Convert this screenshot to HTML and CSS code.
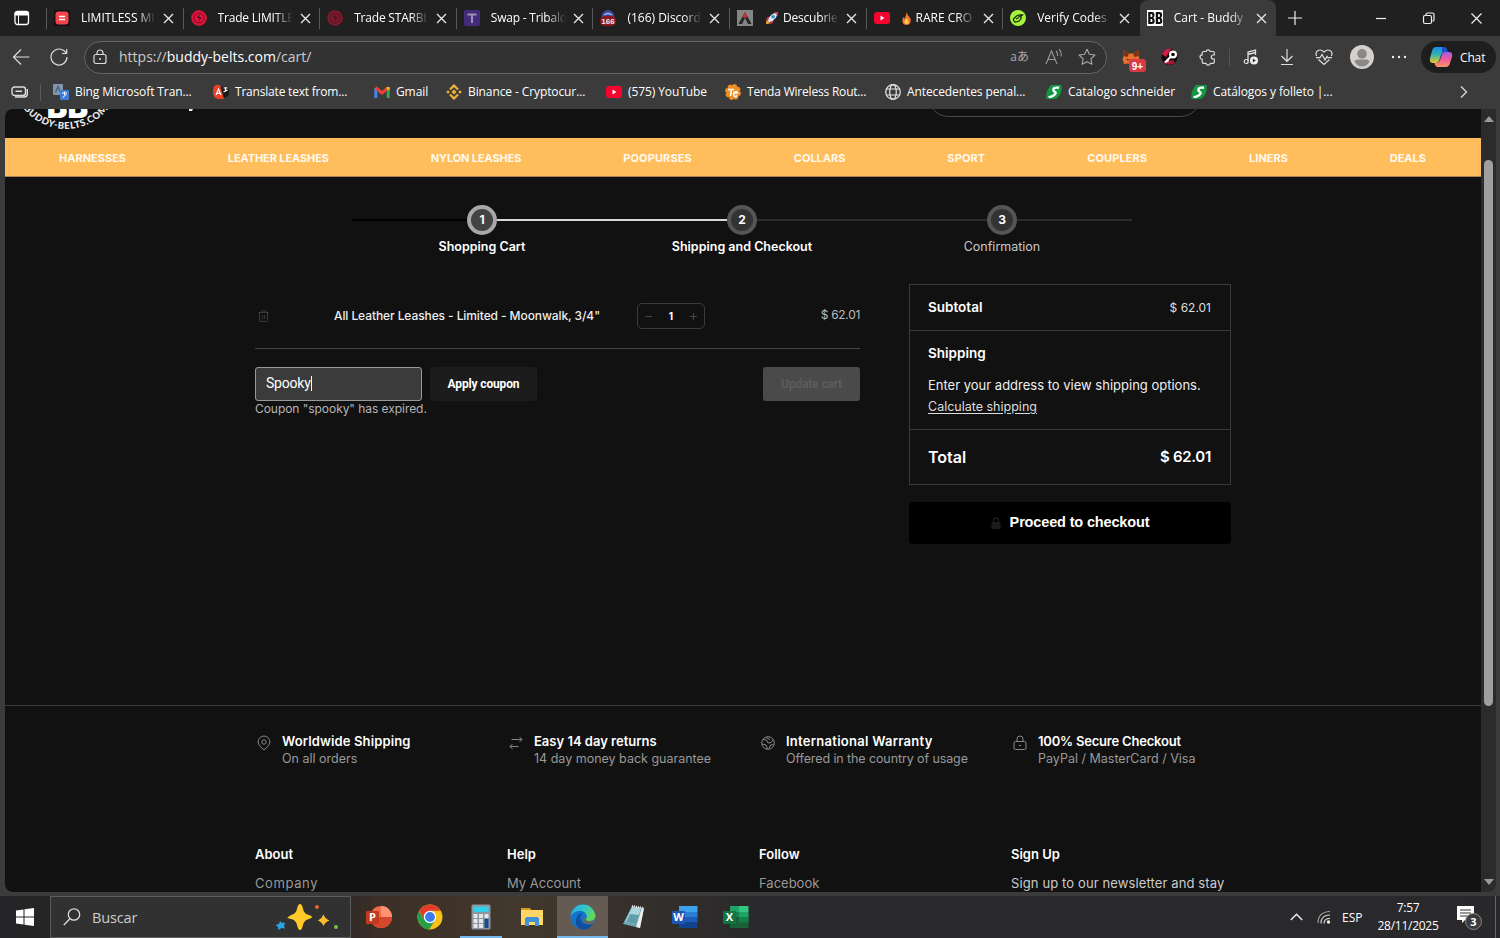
FILE: index.html
```html
<!DOCTYPE html>
<html lang="es">
<head>
<meta charset="utf-8">
<title>Cart - Buddy Belts</title>
<link rel="stylesheet" href="styles.css">
</head>
<body>
<header class="tabs">
  <svg class="tab-actions" width="16" height="16" viewBox="0 0 16 16"><rect x="1" y="1.5" width="13.5" height="13" rx="2.5" fill="none" stroke="#fff" stroke-width="1.3"/><path d="M1 4V3.500Q1 1.500 3 1.500H12.500Q14.500 1.500 14.500 3.500V5H1ZM4.500 5V14" fill="#fff" stroke="#fff" stroke-width="1"/></svg>
  <div class="tab"><svg class="fav" viewBox="0 0 16 16"><path fill="#111" d="M0 0h16v16H0z"/><rect x="1.500" y="1.500" width="13" height="13" rx="3" fill="#f4444b"/><path d="M5 6.500h6M5 9.500h6" stroke="#fff" stroke-width="1.500"/></svg><span class="title">LIMITLESS MI</span><svg class="x" viewBox="0 0 11 11"><path d="M1 1l9 9M10 1l-9 9"/></svg></div>
  <div class="tab"><svg class="fav" viewBox="0 0 16 16"><circle cx="8" cy="8" r="7.500" fill="#e0143c" stroke="#e0143c" stroke-dasharray="1.500 1"/><circle cx="8" cy="8" r="5" fill="none" stroke="#5b0b1c" stroke-width=".8"/><path d="M8.500 4 6 8h2.500L7.500 12 10.500 7.500H8z" fill="#34070f"/></svg><span class="title snug">Trade LIMITLE</span><svg class="x" viewBox="0 0 11 11"><path d="M1 1l9 9M10 1l-9 9"/></svg></div>
  <div class="tab"><svg class="fav dim" viewBox="0 0 16 16"><circle cx="8" cy="8" r="7.500" fill="#e0143c" stroke="#e0143c" stroke-dasharray="1.500 1"/><circle cx="8" cy="8" r="5" fill="none" stroke="#5b0b1c" stroke-width=".8"/><path d="M8.500 4 6 8h2.500L7.500 12 10.500 7.500H8z" fill="#34070f"/></svg><span class="title snug">Trade STARBI</span><svg class="x" viewBox="0 0 11 11"><path d="M1 1l9 9M10 1l-9 9"/></svg></div>
  <div class="tab"><svg class="fav" viewBox="0 0 16 16"><rect width="16" height="16" rx="2" fill="#452b7c"/><path d="M3.500 4.500h9M8 4.500V13" stroke="#9c93ae" stroke-width="2"/></svg><span class="title snug">Swap - Tribald</span><svg class="x" viewBox="0 0 11 11"><path d="M1 1l9 9M10 1l-9 9"/></svg></div>
  <div class="tab"><svg class="fav" viewBox="0 0 16 16"><circle cx="8" cy="6.500" r="6.500" fill="#39479a"/><path d="M4 5q4-3 8 0" stroke="#b9bedb" stroke-width="1.300" fill="none"/><rect y="6" width="16" height="10" rx="5" fill="#8e1820"/><text x="8" y="14" class="fav-count">166</text></svg><span class="title">(166) Discord</span><svg class="x" viewBox="0 0 11 11"><path d="M1 1l9 9M10 1l-9 9"/></svg></div>
  <div class="tab"><svg class="fav" viewBox="0 0 16 16"><path fill="#858585" d="M0 0h16v16H0z"/><path d="M1.500 14 8 2l6.500 12h-3.500L8 8l-3 6z" fill="#262626"/><path d="M8 2l-2.500 5L8 8l2.500-1z" fill="#c9303a"/></svg><span class="title snug"><svg class="emoji" viewBox="0 0 16 16"><path d="M2 14l1-5 4 4z" fill="#f6a62b"/><path d="M4 9 1.500 9.500 4 6h3zM7 12l-.5 2.500L10 12V9z" fill="#d8283b"/><path d="M4 10Q7 2 15 1q-1 8-9 11z" fill="#dce6ee"/><path d="M11 1.700Q13 1 15 1q0 2-.8 4z" fill="#e23a49"/><circle cx="9.700" cy="6.200" r="1.900" fill="#2a91d8"/></svg>Descubrie</span><svg class="x" viewBox="0 0 11 11"><path d="M1 1l9 9M10 1l-9 9"/></svg></div>
  <div class="tab"><svg class="fav" viewBox="0 0 16 16"><rect y="2" width="16" height="12" rx="3" fill="#f7032f"/><path d="M6.500 5.500 10.500 8l-4 2.500z" fill="#fff"/></svg><span class="title"><svg class="emoji flame" viewBox="0 0 12 16"><path d="M6 1q1 3 3 5t1.500 5Q10 15 6 15t-4.500-4Q1.200 8 3 6q0 2 1 2Q6 5 6 1z" fill="#f4772c"/><path d="M6 8q3 3 2 5t-4 0Q3 11 6 8z" fill="#ffd04b"/></svg>RARE CRO</span><svg class="x" viewBox="0 0 11 11"><path d="M1 1l9 9M10 1l-9 9"/></svg></div>
  <div class="tab"><svg class="fav" viewBox="0 0 16 16"><circle cx="8" cy="8" r="8" fill="#a5f23f"/><path d="M3.500 9 6.500 6q3-1.500 6-1-1 1-2.500 1.500 2 .5.500 3T5 12q-2-1-1.500-3zM6 9l3-1.500" fill="none" stroke="#17300a" stroke-width="1.300"/></svg><span class="title">Verify Codes</span><svg class="x" viewBox="0 0 11 11"><path d="M1 1l9 9M10 1l-9 9"/></svg></div>
  <div class="tab active"><svg class="fav" viewBox="0 0 16 16"><path fill="#fff" d="M0 0h16v16H0z"/><path fill-rule="evenodd" d="M1.200 2H5q2.500 0 2.500 3 0 2-1.200 2.700Q7.700 8.500 7.700 11q0 3-2.700 3H1.200zM3.500 4v3H4.500q.9 0 .9-1.500T4.500 4zM3.500 9v3h1.100q.9 0 .9-1.500T4.600 9zM8.800 2h3.800q2.500 0 2.500 3 0 2-1.200 2.700 1.400.8 1.400 3.300 0 3-2.700 3H8.800zM11.100 4v3h1q.9 0 .9-1.500T12.100 4zM11.100 9v3h1.100q.9 0 .9-1.500T12.200 9z" fill="#111"/></svg><span class="title wide">Cart - Buddy</span><svg class="x" viewBox="0 0 11 11"><path d="M1 1l9 9M10 1l-9 9"/></svg></div>
  <svg class="newtab" width="16" height="16" viewBox="0 0 16 16"><path d="M8 1v14M1 8h14" stroke="#eee" stroke-width="1.200"/></svg>
  <svg class="winctl" width="112" height="16" viewBox="0 0 112 16"><g fill="none" stroke="#eee" stroke-width="1.200"><path d="M1 8.500h10"/><rect x="48.500" y="5.500" width="8" height="8" rx="1.500"/><path d="M51 5V4.500Q51 3 52.500 3h5Q59 3 59 4.500v5.500Q59 11 57.500 11.200"/><path d="M96.500 3.500l10 10M106.500 3.500l-10 10"/></g></svg>
</header>

<div class="toolbar">
  <svg class="back" width="18" height="18" viewBox="0 0 18 18"><path d="M17.500 9H1.500M9 1.500 1.500 9 9 16.500" fill="none" stroke="#ddd" stroke-width="1.200"/></svg>
  <svg class="reload" width="18" height="18" viewBox="0 0 18 18"><path d="M17 9A8 8 0 1 1 14 2.800L16.500 5M16.700 1v4.500H12" fill="none" stroke="#ddd" stroke-width="1.200"/></svg>
  <div class="address">
    <svg width="14" height="16" viewBox="0 0 14 16"><g fill="none" stroke="#ddd" stroke-width="1.200"><rect x="1" y="5.500" width="12" height="9" rx="2"/><path d="M4 5.500V4a3 3 0 0 1 6 0v1.500"/></g><circle cx="7" cy="10" r="1" fill="#ddd"/></svg>
    <span class="url">https://<b>buddy-belts.com</b>/cart/</span>
    <span class="translate">aあ</span>
    <svg class="read" width="18" height="16" viewBox="0 0 18 16"><path d="M1 15 6.500 2 12 15M3 10.500h7M11 2q2 2 1.500 5M14 0q3 3 2 7.500" fill="none" stroke="#999" stroke-width="1.100"/></svg>
    <svg class="star" width="18" height="18" viewBox="0 0 18 18"><path d="M9 1.300l2.400 5 5.500.7-4 3.800 1 5.500L9 13.700l-4.900 2.600 1-5.500-4-3.800 5.500-.7z" fill="none" stroke="#aaa" stroke-width="1.100" stroke-linejoin="round"/></svg>
  </div>
  <div class="ext">
    <svg class="fox" width="26" height="24" viewBox="0 0 26 24"><path d="M2 1l6 3.500h4L18 1l-.5 6 1 3-1.500 5-4-.5-3 1.500-3-1.500L3 15l-1.500-5 1-3z" fill="#e8702a"/><path d="M2 1l6 3.500L6.500 8 2.500 7zM18 1l-6 3.500L13.500 8l4-1z" fill="#7d3218"/><path d="M5.500 9.500l3 1.500-2 .5zM14.500 9.500l-3 1.500 2 .5z" fill="#2a2326"/><rect x="8" y="10" width="17" height="13" rx="3" fill="#d93a45"/><text x="16.500" y="20.500" class="badge">9+</text></svg>
    <svg class="key" width="18" height="18" viewBox="0 0 18 18"><circle cx="8.500" cy="9" r="8" fill="#12070b"/><path d="M1 6Q4 0 10 1L5 9z" fill="#d81b45"/><path d="M2 14q5 5 12 1l-2-3z" fill="#a71735"/><circle cx="12" cy="6.500" r="2.900" fill="none" stroke="#fff" stroke-width="2.200"/><path d="M10 8.500l-6 6M5.500 11.500l2 2" stroke="#fff" stroke-width="2"/></svg>
    <svg class="puzzle" width="18" height="18" viewBox="0 0 18 18"><path d="M4.500 3.500H7a2.200 2.200 0 0 1 4.200 0H14a1.300 1.300 0 0 1 1.300 1.300V7h-1a2 2 0 0 0 0 4h1v3A1.300 1.300 0 0 1 14 15.300h-2.700a2.200 2.200 0 0 1-4.300 0H4.500A1.300 1.300 0 0 1 3.200 14v-2.700a2.200 2.200 0 0 1 0-4.400V4.800A1.300 1.300 0 0 1 4.500 3.500z" fill="none" stroke="#ddd" stroke-width="1.200"/></svg>
    <i class="vsep"></i>
    <svg class="music" width="16" height="16" viewBox="0 0 16 16"><path d="M5 12.500V3l7.500-2v5M5 5.500l7.500-2" fill="none" stroke="#ddd" stroke-width="1.300"/><circle cx="3.200" cy="12.500" r="2" fill="none" stroke="#ddd" stroke-width="1.200"/><circle cx="11" cy="11.500" r="4" fill="#eee"/><path d="M9.800 9.500v4l3-2z" fill="#333"/></svg>
    <svg class="down" width="14" height="18" viewBox="0 0 14 18"><path d="M7 1v12M1.500 8 7 13.300 12.500 8M1 16.500h12" fill="none" stroke="#ddd" stroke-width="1.200"/></svg>
    <svg class="heart" width="18" height="18" viewBox="0 0 18 18"><path d="M1.500 8Q0 4 3 2.500T9 4q3-3 6-1.500T16.500 8M3.500 11.500 9 16.500l5.500-5M1 9.700h4L7 6.500l3 5.500 2-3.500.8 1.200H17" fill="none" stroke="#ddd" stroke-width="1.200"/></svg>
    <svg class="avatar" width="24" height="24" viewBox="0 0 24 24"><circle cx="12" cy="12" r="12" fill="#d3d0ce"/><circle cx="12" cy="8.800" r="4.800" fill="#8b8886"/><path d="M4.500 16.500Q5 14.500 8 14.500h8q3 0 3.500 2Q17 21.500 12 21.500t-7.500-5z" fill="#8b8886"/></svg>
    <svg class="dots" width="16" height="4" viewBox="0 0 16 4"><circle cx="2" cy="2" r="1.200" fill="#eee"/><circle cx="8" cy="2" r="1.200" fill="#eee"/><circle cx="14" cy="2" r="1.200" fill="#eee"/></svg>
    <div class="chat"><svg width="24" height="22" viewBox="0 0 24 22"><defs><linearGradient id="ca" x1="0" y1="0" x2="0" y2="1"><stop offset="0" stop-color="#1b8be9"/><stop offset=".5" stop-color="#32b6a6"/><stop offset="1" stop-color="#f2c72d"/></linearGradient><linearGradient id="cb" x1="0" y1="0" x2="0" y2="1"><stop offset="0" stop-color="#a15cf0"/><stop offset=".5" stop-color="#ee5c99"/><stop offset="1" stop-color="#ff9861"/></linearGradient></defs><path d="M7 1h8q2 0 3 3l.5 2H15q-2 0-3 3l-2 6q-1 2-3 2H4q-4 0-3-5l2-7q1-4 4-4z" fill="url(#ca)"/><path d="M17 21H9q-2 0-3-2l-.5-2H8q2 0 3-3l2-6q1-2 3-2h4q4 0 3 5l-2 6q-1 4-4 4z" fill="url(#cb)"/><path d="M13 1h2q2 0 3 3l.5 2H15q-1 0-2 1z" fill="#1754d4"/></svg><span>Chat</span></div>
  </div>
</div>

<nav class="bookmarks">
  <svg class="wallet" width="18" height="12" viewBox="0 0 18 12"><rect x="1" y="1" width="13.500" height="8.500" rx="2.500" fill="none" stroke="#ddd" stroke-width="1.400"/><path d="M4.500 5.300h6.500M16.300 3v5q0 3-3 3H4" stroke="#ddd" stroke-width="1.400" fill="none"/></svg>
  <i class="bsep"></i>
  <div class="bm"><svg class="fav" viewBox="0 0 16 16"><rect width="10" height="11" rx="1" fill="#8296ac"/><path d="M2.500 8.500 5 2.500l2.500 6" stroke="#45617e" fill="none" stroke-width="1.400"/><rect x="7" y="6" width="9" height="10" rx="1" fill="#3b7cd8"/><path d="M9 9h5M11.500 7.500V11M9.500 13.500l4-3" stroke="#fff"/></svg><span>Bing Microsoft Tran...</span></div>
  <div class="bm snug"><svg class="fav" viewBox="0 0 16 16"><circle cx="11" cy="8" r="5.500" fill="#191919"/><path d="M3 1h4l4 14H5Q0 14 0 8t3-7z" fill="#ea4027"/><path d="M3 11 5.500 5 8 11M4 9.300h3M10.500 4h4M12.500 3v4M10.500 8l4-2" stroke="#fff" fill="none" stroke-width="1.200"/></svg><span>Translate text from...</span></div>
  <div class="bm"><svg class="fav" viewBox="0 0 16 16"><path d="M1.800 14V4" stroke="#4285f4" stroke-width="3"/><path d="M14.200 14V4" stroke="#34a853" stroke-width="3"/><path d="M1.500 3.500 8 9l6.500-5.500" stroke="#ea4335" stroke-width="3" fill="none"/><path d="M12.700 5.500V3l3 0V6z" fill="#fbbc04"/></svg><span>Gmail</span></div>
  <div class="bm"><svg class="fav" viewBox="0 0 16 16"><path d="M4 5.500 8 1.500l4 4M4 10.500l4 4 4-4" fill="none" stroke="#f0b434" stroke-width="2.200"/><path d="M8 5.500 10.500 8 8 10.500 5.500 8zM2 6.200 3.800 8 2 9.800.2 8zM14 6.200 15.800 8 14 9.800 12.200 8z" fill="#f0b434"/></svg><span>Binance - Cryptocur...</span></div>
  <div class="bm"><svg class="fav" viewBox="0 0 16 16"><rect y="2" width="16" height="12" rx="3" fill="#f7032f"/><path d="M6.500 5.500 10.500 8l-4 2.500z" fill="#fff"/></svg><span>(575) YouTube</span></div>
  <div class="bm snug"><svg class="fav" viewBox="0 0 16 16"><circle cx="8" cy="8" r="7" fill="#f08f22" stroke="#f08f22" stroke-width="2" stroke-dasharray="3.500 2"/><path d="M3 5.500h6M6.500 5.500 5.500 12M8 9h4.500Q12 7 10 8t-1 3.500 3 0" stroke="#fff" stroke-width="1.600" fill="none"/></svg><span>Tenda Wireless Rout...</span></div>
  <div class="bm"><svg class="fav" viewBox="0 0 16 16"><g fill="none" stroke="#e6e6e6" stroke-width="1.200"><circle cx="8" cy="8" r="7.300"/><ellipse cx="8" cy="8" rx="3.300" ry="7.300"/><path d="M1.500 5h13M1.500 11h13"/></g></svg><span>Antecedentes penal...</span></div>
  <div class="bm plain"><svg class="fav" viewBox="0 0 16 16"><path d="M5 1h10.500q1 7-3 11.500-1.500 2.500-4.500 2.500H.5q-1-7 3-12z" fill="#12983f"/><path d="M13 3.800q-5-.8-5.500 1.200t1.500 3-1.500 3.500-4.500.7" fill="none" stroke="#fff" stroke-width="2.400"/></svg><span>Catalogo schneider</span></div>
  <div class="bm"><svg class="fav" viewBox="0 0 16 16"><path d="M5 1h10.500q1 7-3 11.500-1.500 2.500-4.500 2.500H.5q-1-7 3-12z" fill="#12983f"/><path d="M13 3.800q-5-.8-5.500 1.200t1.500 3-1.500 3.500-4.500.7" fill="none" stroke="#fff" stroke-width="2.400"/></svg><span>Catálogos y folleto |...</span></div>
  <svg class="more" width="8" height="12" viewBox="0 0 8 12"><path d="M1 .500 6.500 6 1 11.500" fill="none" stroke="#ddd" stroke-width="1.300"/></svg>
</nav>

<div class="window">
  <main class="page">
    <div class="site-head">
      <svg width="1300" height="29" viewBox="0 0 1300 29">
        <path id="ring" d="M7 -34A54 54 0 0 0 115 -34" fill="none"/>
        <text class="ring-text"><textPath href="#ring" startOffset="50%">BUDDY-BELTS.COM</textPath></text>
        <text class="bb" x="62.500" y="9">BB</text>
        <path d="M184 0h4l-1 2h-3z" fill="#eee"/>
        <rect x="923.500" y="-40" width="272" height="47.500" rx="20" fill="none" stroke="#4a4a4a"/>
      </svg>
    </div>
    <nav class="menu"><span>HARNESSES</span><span class="tight">LEATHER LEASHES</span><span class="tight">NYLON LEASHES</span><span class="loose">POOPURSES</span><span>COLLARS</span><span class="loose">SPORT</span><span class="loose">COUPLERS</span><span>LINERS</span><span>DEALS</span></nav>
    <div class="steps">
      <div class="step one"><b>1</b><span>Shopping Cart</span></div>
      <div class="step two"><b>2</b><span>Shipping and Checkout</span></div>
      <div class="step three"><b>3</b><span>Confirmation</span></div>
    </div>
    <div class="cart">
      <section class="items">
        <div class="item">
          <svg class="trash" width="11" height="12" viewBox="0 0 11 12"><path d="M.500 2.500h10M3.500 2.500V.800h4v1.700M1.500 2.500v8q0 1 1 1h6q1 0 1-1v-8M4.300 5v4M6.700 5v4" fill="none" stroke="#3c3c3c"/></svg>
          <span class="name">All Leather Leashes - Limited - Moonwalk, 3/4"</span>
          <div class="qty"><i class="minus"></i><b>1</b><i class="plus"></i></div>
          <span class="price">$ 62.01</span>
        </div>
        <div class="coupon">
          <div class="field"><span>Spooky</span><i class="caret"></i></div>
          <div class="apply">Apply coupon</div>
          <div class="update">Update cart</div>
        </div>
        <p class="error">Coupon "spooky" has expired.</p>
      </section>
      <aside class="summary">
        <div class="totals">
          <div class="row sub"><b>Subtotal</b><span>$ 62.01</span></div>
          <div class="row ship"><b>Shipping</b><p>Enter your address to view shipping options.</p><a>Calculate shipping</a></div>
          <div class="row total"><b>Total</b><b class="sum">$ 62.01</b></div>
        </div>
        <div class="checkout"><svg width="10" height="12" viewBox="0 0 10 12"><rect x=".500" y="5" width="9" height="7" rx="1" fill="#1c1c1c"/><path d="M2.500 5V3.500a2.500 2.500 0 0 1 5 0V5" fill="none" stroke="#1c1c1c" stroke-width="1.300"/></svg><span>Proceed to checkout</span></div>
      </aside>
    </div>
    <footer class="foot">
      <div class="feats">
        <div class="feat"><svg width="14" height="16" viewBox="0 0 14 16"><path d="M7 15Q1 10.500 1 7a6 6 0 0 1 12 0q0 3.500-6 8z"/><circle cx="7" cy="7" r="2.200"/></svg><div><b class="loose">Worldwide Shipping</b><span>On all orders</span></div></div>
        <div class="feat"><svg width="14" height="16" viewBox="0 0 14 16"><path d="M2.500 4.500H13M10.500 2 13 4.500 10.500 7M9.500 11.500H1M3.500 9 1 11.500 3.500 14"/></svg><div><b>Easy 14 day returns</b><span>14 day money back guarantee</span></div></div>
        <div class="feat"><svg width="14" height="16" viewBox="0 0 14 16"><circle cx="7" cy="8" r="6.300"/><path d="M2 4.500l3.500.500 1.500 3 3-.500 2.500-3M1 9l4 1 1.500 4M12.500 9.500 9.500 10 8 13.500M5 2.500l4 2"/></svg><div><b class="looser">International Warranty</b><span class="tight">Offered in the country of usage</span></div></div>
        <div class="feat"><svg width="14" height="16" viewBox="0 0 14 16"><rect x="1" y="6.500" width="12" height="8" rx="1.500"/><path d="M4 6.500V4a3 3 0 0 1 6 0v2.500M6 10.500h2"/></svg><div><b class="snug">100% Secure Checkout</b><span>PayPal / MasterCard / Visa</span></div></div>
      </div>
      <div class="cols">
        <div><b>About</b><span class="open">Company</span></div>
        <div><b>Help</b><span>My Account</span></div>
        <div><b>Follow</b><span>Facebook</span></div>
        <div class="signup"><b>Sign Up</b><span class="loose">Sign up to our newsletter and stay</span></div>
      </div>
    </footer>
  </main>
  <div class="scroll"><i class="up"></i><i class="thumb"></i><i class="dn"></i></div>
</div>

<div class="taskbar">
  <div class="start"><svg width="18" height="18" viewBox="0 0 18 18"><path d="M0 2.500 7.500 1.500V8.500H0zM8.500 1.300 18 0v8.500H8.500zM0 9.500h7.500v7L0 15.500zM8.500 9.500H18V18l-9.500-1.300z" fill="#fff"/></svg></div>
  <div class="search">
    <svg width="18" height="18" viewBox="0 0 18 18"><circle cx="11" cy="6.500" r="5.700" fill="none" stroke="#ddd" stroke-width="1.300"/><path d="M7 10.800.800 17" stroke="#ddd" stroke-width="1.300"/></svg>
    <span class="q">Buscar</span>
    <svg class="spark" width="64" height="28" viewBox="0 0 64 28"><path d="M25 1q2 0 3 5 1 5 6 6 3 1 3 2t-3 2q-5 1-6 6t-3 5-3-5-6-6-3-2 3-2q5-1 6-6t3-5z" fill="#ffc928"/><path d="M48.500 11.500q1.500 4 6 6-4.500 1.500-6 5.500-1.500-4-5.500-5.500 4-2 5.500-6z" fill="#f9bd2c"/><path d="M5 18l2 2 3-.500-1 3.500 1 2.500-3.500-.500L3.500 27 3 24l-2.500-2 3.500-1z" fill="#28a4e8"/><circle cx="42" cy="4" r="2" fill="#e26a31"/><circle cx="61" cy="24" r="2" fill="#7abf45"/></svg>
  </div>
  <div class="apps">
    <div class="app"><svg width="26" height="26" viewBox="0 0 26 26"><circle cx="15" cy="13" r="11" fill="#ec6c47"/><path d="M15 2a11 11 0 0 1 11 11H15z" fill="#ff9273"/><path d="M4 13h22a11 11 0 0 1-22 0z" fill="#d4472a"/><rect x="0" y="7" width="13" height="13" rx="1" fill="#c23b20"/><text x="6.500" y="17.300" class="ms">P</text></svg></div>
    <div class="app"><svg width="26" height="26" viewBox="0 0 26 26"><circle cx="13" cy="13" r="12.500" fill="#fbc116"/><path d="M2.200 6.800A12.500 12.500 0 0 0 12 25.500L18.400 16 13 13 7.600 16z" fill="#289e49"/><path d="M2.200 6.800A12.500 12.500 0 0 1 23.800 6.800H13L7.600 16z" fill="#e33b2e"/><circle cx="13" cy="13" r="6.200" fill="#fff"/><circle cx="13" cy="13" r="4.900" fill="#3a7ceb"/></svg></div>
    <div class="app run"><svg width="20" height="26" viewBox="0 0 20 26"><rect x=".500" y=".500" width="19" height="25" rx="1.500" fill="#8d969f"/><rect x="2.500" y="2.500" width="15" height="5.500" fill="#36cdea"/><g fill="#e3e7ea"><path d="M2.500 10h4v4h-4zM8 10h4v4H8zM13.500 10h4v4h-4zM2.500 15h4v4h-4zM8 15h4v4H8zM2.500 20h4v4h-4zM8 20h4v4H8z"/></g><path d="M13.500 15h4v9h-4z" fill="#17498c"/></svg></div>
    <div class="app"><svg width="24" height="20" viewBox="0 0 24 20"><path d="M1 1h9l2 3H1z" fill="#d99b1b"/><rect x="1" y="3" width="22" height="15" fill="#ffd767"/><path d="M5 19V12q0-2 2-2h10q2 0 2 2v7h-4v-4H9v4z" fill="#3d93d3"/></svg></div>
    <div class="app run current"><svg width="26" height="26" viewBox="0 0 26 26"><defs><linearGradient id="ed" x1="0" y1="0" x2="1" y2=".400"><stop offset="0" stop-color="#28a7e8"/><stop offset=".6" stop-color="#34c8c4"/><stop offset="1" stop-color="#61d957"/></linearGradient></defs><circle cx="13" cy="13" r="12.500" fill="#1474c9"/><path d="M.6 12A12.500 12.500 0 0 1 25.500 12q0 5-6 5-4 0-4-2 2-1 1-4Q14 6 8 7 3 8 .6 12z" fill="url(#ed)"/><path d="M13 9q-4 3-2 8 3 5 12 3-4 6-11 5.500Q5 24 6 16q1-6 7-7z" fill="#124f9e"/><path d="M15.500 15q0 2 4 2 3 0 5-1.500-.5 3-2 4.500-6 1-9-2-1-3 1-5z" fill="#6b655f"/></svg></div>
    <div class="app"><svg width="24" height="24" viewBox="0 0 24 24"><path d="M1 19 10 1l12 2-4 20z" fill="#6fa3ae"/><path d="M3 17 10 2l9 1-5 16z" fill="#a9d6dd"/><path d="M8 9 4 17l10 2 3-9z" fill="#5f9faa"/><path d="M10 1l12 2" stroke="#eee" stroke-width="2" stroke-dasharray="1 1"/><path d="M15 19l4.500-15L22 3l-4 20-4-1z" fill="#eee"/></svg></div>
    <div class="app"><svg width="26" height="24" viewBox="0 0 26 24"><path d="M7 1h18.500v6H7z" fill="#3da1ec"/><path d="M7 7h18.500v5H7z" fill="#2b7cd3"/><path d="M7 12h18.500v5.500H7z" fill="#1c5cbd"/><path d="M7 17.500h18.500V23H7z" fill="#12438f"/><rect y="6" width="13" height="13" rx="1" fill="#1e56b3"/><text x="6.500" y="16.300" class="ms">W</text></svg></div>
    <div class="app"><svg width="26" height="24" viewBox="0 0 26 24"><path d="M7 1h9v6H7z" fill="#21a366"/><path d="M16 1h9.500v6H16z" fill="#33c481"/><path d="M7 7h9v5H7z" fill="#138049"/><path d="M16 7h9.500v5H16z" fill="#21a366"/><path d="M7 12h18.500v11H7z" fill="#176038"/><path d="M16 12h9.500v5.500H16z" fill="#138049"/><rect y="6" width="13" height="13" rx="1" fill="#127540"/><text x="6.500" y="16.300" class="ms">X</text></svg></div>
  </div>
  <div class="tray">
    <svg class="chev" width="13" height="8" viewBox="0 0 13 8"><path d="M.800 7 6.500 1.200 12.200 7" fill="none" stroke="#eee" stroke-width="1.400"/></svg>
    <svg class="wifi" width="14" height="14" viewBox="0 0 14 14"><g fill="none" stroke-width="1.200"><path d="M1 13Q1 2 13 1.500" stroke="#999"/><path d="M4 13.500Q4 5 13 5" stroke="#ccc"/><path d="M7 13.500Q7 8.500 13 8.500" stroke="#ddd"/></g><circle cx="11.500" cy="12" r="1.700" fill="#eee"/></svg>
    <span class="lang">ESP</span>
    <div class="clock"><span>7:57</span><span>28/11/2025</span></div>
    <svg class="note" width="27" height="27" viewBox="0 0 27 27"><path d="M1 2h17v14H9l-3 3v-3H1z" fill="#fff"/><path d="M4 6h11M4 9h11M4 12h8" stroke="#333" stroke-width="1.200"/><circle cx="17.500" cy="17.500" r="8" fill="#3a393b" stroke="#888"/><text x="17.500" y="21.500" class="cnt">3</text></svg>
    <i class="peek"></i>
  </div>
</div>
</body>
</html>
```
FILE: styles.css
```css
* { box-sizing: border-box; }
body { margin: 0; width: 1500px; height: 938px; overflow: hidden; display: flex; flex-direction: column; background: #3b3b3b; color: #fff; font-family: "Open Sans", "Noto Sans", "Noto Sans CJK JP", sans-serif; font-size: 12px; }
svg { display: block; flex: none; }
span, b { white-space: nowrap; }
.fav { width: 16px; height: 16px; }
.dim { opacity: .5; }

.tabs { height: 36px; flex: none; background: #202020; display: flex; align-items: center; }
.tab-actions { margin: 0 17px 0 14px; }
.tab { width: 136.600px; height: 36px; flex: none; display: flex; align-items: center; padding-left: 7px; position: relative; }
.tab::before { content: ""; position: absolute; left: -1px; top: 8px; width: 1px; height: 21px; background: #5a5a5a; }
.tab .title { margin-left: 11px; width: 75px; height: 20px; line-height: 20px; overflow: hidden; display: flex; align-items: center; -webkit-mask-image: linear-gradient(90deg, #000 75%, transparent 100%); mask-image: linear-gradient(90deg, #000 75%, transparent 100%); }
.emoji { width: 15px; height: 15px; margin-right: 4px; }
.flame { width: 11px; }
.x { width: 11px; height: 11px; margin-left: 7px; fill: none; stroke: #e4e4e4; stroke-width: 1.4; }
.active { background: #3b3b3b; border-radius: 8px 8px 0 0; }
.active::before { display: none; }
.fav-count { font: bold 8px "Liberation Sans", sans-serif; fill: #eee; text-anchor: middle; }
.newtab { margin-left: 11px; }
.winctl { margin-left: auto; margin-right: 13px; }

.toolbar { height: 42px; flex: none; display: flex; align-items: center; padding-left: 12px; }
.reload { margin-left: 20px; }
.address { margin-left: 16px; width: 1023px; height: 33px; border: 1px solid #666; border-radius: 17px; background: #323232; display: flex; align-items: center; padding: 0 10px 0 8px; }
.url { font-size: 14px; margin-left: 12px; flex: 1; line-height: 20px; color: #ccc; }
.url b { font-weight: 400; color: #fff; }
.translate { font-size: 12px; color: #aaa; line-height: 18px; }
.read { margin-left: 16px; }
.star { margin-left: 15px; }
.ext { display: flex; align-items: center; flex: 1; height: 42px; }
.fox { margin: 8px 0 0 14px; }
.key { margin-left: 14px; }
.puzzle { margin-left: 20px; }
.vsep { width: 1px; height: 17px; background: #555; margin-left: 12px; }
.music { margin-left: 13px; }
.down { margin-left: 21px; }
.heart { margin-left: 21px; }
.avatar { margin-left: 17px; }
.dots { margin-left: 17px; }
.chat { margin-left: 14px; width: 75px; height: 32px; border-radius: 16px; background: #1e1e1e; display: flex; align-items: center; padding-left: 8px; gap: 7px; letter-spacing: -.15px; }
.badge { font: bold 10px "Liberation Sans", sans-serif; fill: #fff; text-anchor: middle; }

.bookmarks { height: 31px; flex: none; display: grid; grid-template-columns: 40px 13px 160px 161px 72px 160px 119px 160px 161px 145px 269px 20px; align-items: center; padding-bottom: 3px; }
.wallet { margin-left: 11px; }
.bsep { width: 1px; height: 17px; background: #5a5a5a; }
.bm { display: flex; align-items: center; gap: 6px; line-height: 18px; letter-spacing: -.1px; }
.bm.plain { letter-spacing: 0; }
.snug, .bm.snug { letter-spacing: -.2px; }

.window { height: 787px; flex: none; display: flex; padding: 0 4px 4px 5px; }
.page { width: 1476px; height: 783px; background: #111; border-radius: 8px 0 0 8px; overflow: hidden; font-family: Inter, sans-serif; font-size: 12px; }
.tight { letter-spacing: -.1px; }
.loose { letter-spacing: .12px; }
.looser { letter-spacing: .27px; }
.open { letter-spacing: .6px; }
.site-head { height: 29px; }
.ring-text { font: 900 9.500px Lato, sans-serif; fill: #eee; text-anchor: middle; letter-spacing: .6px; }
.bb { font: 900 31px Inter, sans-serif; fill: #fff; text-anchor: middle; }
.menu { height: 39px; background: #ffbd5c; border-bottom: 1px solid #a98450; display: flex; justify-content: space-between; align-items: center; padding: 2px 55px 0 54px; font-weight: 700; font-size: 11px; color: #fffaf0; }

.steps { margin: 27px 0 0 347px; width: 781px; display: grid; grid-template-columns: repeat(3, 260px); height: 80px; }
.step { display: grid; grid-template-columns: 1fr 30px 1fr; grid-template-rows: 31px 22px; align-items: center; justify-items: center; }
.step::before, .step::after { content: ""; height: 2px; width: 100%; background: #2c2c2c; }
.step::before { order: 0; }
.step b { order: 1; width: 30px; height: 30px; border-radius: 50%; border: 4px solid #555; background: #333; display: grid; place-items: center; font-size: 12px; }
.step::after { order: 2; }
.step span { order: 3; grid-column: 1 / 4; font-weight: 600; font-size: 12.500px; }
.step.one b { border-color: #a8a8a8; background: #444; }
.one::before { background: #000; }
.one::after, .two::before { background: #d8d8d8; }
.step.three span { font-weight: 400; color: #c8c8c8; }

.cart { margin-left: 250px; width: 976px; display: flex; gap: 49px; height: 421px; }
.items { width: 605px; }
.item { height: 65px; border-bottom: 1px solid #444; display: flex; align-items: center; padding: 1px 0 1px 3px; }
.name { margin: -2px 0 0 65px; width: 303px; font-weight: 500; letter-spacing: -.09px; color: #eee; }
.qty { width: 68px; height: 26px; border: 1px solid #3a3a3a; border-radius: 5px; display: flex; align-items: center; justify-content: space-between; padding: 0 7px; font-size: 10px; }
.minus, .plus { width: 7px; height: 7px; background: linear-gradient(#444, #444) 0 3px / 7px 1px no-repeat; }
.plus { background: linear-gradient(#444, #444) 0 3px / 7px 1px no-repeat, linear-gradient(#444, #444) 3px 0 / 1px 7px no-repeat; }
.price { margin: -3px 0 0 auto; color: #bbb; letter-spacing: -.3px; }
.coupon { margin-top: 18px; height: 34px; display: flex; font-family: Roboto, sans-serif; }
.field { width: 167px; height: 34px; border: 1px solid #999; border-radius: 3px; background: #3b3b3b; display: flex; align-items: center; padding: 0 0 2px 10px; font-size: 14px; letter-spacing: -.2px; }
.caret { width: 1px; height: 15px; background: #fff; }
.apply { margin-left: 8px; width: 107px; background: #1c1c1c; border-radius: 3px; display: grid; place-items: center; font-weight: 700; letter-spacing: -.15px; }
.update { margin-left: auto; width: 97px; background: #4a4a4a; border-radius: 3px; display: grid; place-items: center; font-weight: 700; color: #5c5c5c; letter-spacing: -.16px; }
.error { margin: -1px 0 0; line-height: 17px; color: #b5b5b5; letter-spacing: -.05px; }
.summary { width: 322px; }
.totals { border: 1px solid #3a3a3a; height: 201px; }
.row { padding: 0 19px 0 18px; font-size: 13px; }
.row b { font-weight: 600; font-size: 13.500px; }
.sub { height: 46px; border-bottom: 1px solid #3a3a3a; display: flex; justify-content: space-between; align-items: center; padding-bottom: 1px; }
.sub span { font-size: 12px; color: #ddd; }
.ship { height: 99px; border-bottom: 1px solid #3a3a3a; padding-top: 13px; line-height: 18px; }
.ship b { display: table; }
.ship p { margin: 14px 0 3px; color: #eee; }
.ship a { font-size: 12.500px; color: #ddd; text-decoration: underline; text-underline-offset: 2px; }
.total { height: 53px; display: flex; justify-content: space-between; align-items: center; }
.total b { font-size: 16px; }
.total .sum { font-size: 15px; letter-spacing: -.3px; }
.checkout { margin-top: 17px; height: 42px; border-radius: 4px; background: #000; display: flex; align-items: center; justify-content: center; gap: 9px; font: 700 14.500px "Liberation Sans", sans-serif; letter-spacing: -.15px; }
.checkout span { margin-top: -2px; }

.foot { border-top: 1px solid #3c3c3c; padding: 26px 0 0 250px; }
.feats, .cols { display: grid; grid-template-columns: repeat(4, 252px); }
.feats { height: 113px; }
.feat { display: flex; gap: 11px; padding-left: 2px; }
.feat svg { margin-top: 3px; fill: none; stroke: #888; }
.feat b, .feat span, .cols b, .cols span { display: table; line-height: 18px; }
.feat b, .cols b { font-weight: 600; font-size: 13px; }
.feat span { font-size: 12.500px; color: #999; }
.cols b { margin-bottom: 11px; }
.cols span { font-size: 13px; color: #999; }
.cols .signup span { color: #ccc; }

.scroll { width: 15px; background: #2b2b2b; border-radius: 0 0 8px 0; display: flex; flex-direction: column; align-items: center; padding: 7px 0; }
.up, .dn { border: 5px solid transparent; }
.up { border-top: 0; border-bottom: 6px solid #999; }
.dn { border-bottom: 0; border-top: 6px solid #999; margin-top: auto; }
.thumb { margin-top: 38px; width: 9px; height: 546px; border-radius: 5px; background: #9f9f9f; }

.taskbar { height: 42px; flex: none; display: flex; background: linear-gradient(90deg, #252426 0, #2b2928 22%, #3a2e26 25%, #43382c 34%, #35302c 42%, #2a292b 50%, #29292c 100%); }
.start { width: 50px; display: grid; place-items: center; }
.search { width: 301px; border: 1px solid #5c5c5c; background: #313131; display: flex; align-items: center; padding: 0 11px 0 12px; }
.q { font-size: 14.500px; margin-left: 11px; color: #ccc; flex: 1; letter-spacing: -.15px; }
.apps { display: flex; margin-left: 2px; }
.app { width: 51px; display: grid; place-items: center; }
.run { background: linear-gradient(#76b9ed, #76b9ed) 50% 100% / 42px 2px no-repeat; }
.run.current { background: linear-gradient(#76b9ed, #76b9ed) 50% 100% / 100% 2px no-repeat, #655b52; }
.ms { font: bold 11px "Open Sans", sans-serif; fill: #fff; text-anchor: middle; }
.tray { margin-left: auto; display: flex; align-items: center; }
.chev { margin-left: 2px; }
.wifi { margin-left: 14px; }
.lang { margin-left: 11px; width: 20px; }
.clock { margin-left: 15px; width: 62px; display: grid; justify-items: center; line-height: 18px; font-size: 12px; letter-spacing: -.27px; }
.note { margin-left: 17px; }
.cnt { font: bold 11px "Open Sans", sans-serif; fill: #fff; text-anchor: middle; }
.peek { width: 1px; height: 42px; background: #666; margin: 0 4px 0 12px; }
```
